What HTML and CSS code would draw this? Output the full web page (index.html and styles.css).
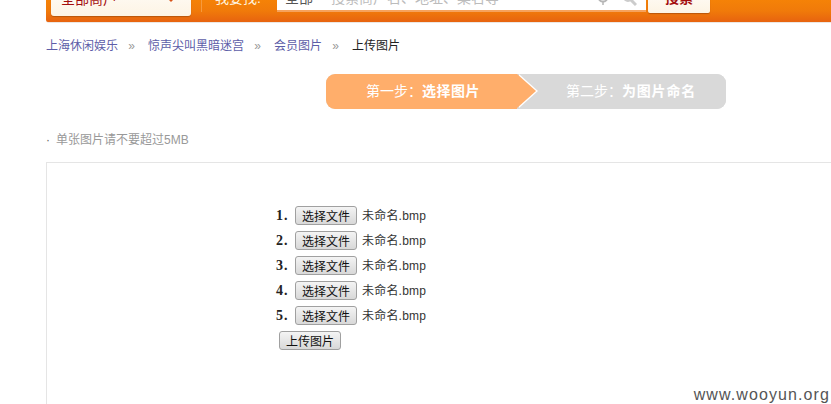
FILE: index.html
```html
<!DOCTYPE html>
<html lang="zh">
<head>
<meta charset="utf-8">
<title>上传图片</title>
<link rel="stylesheet" href="styles.css">
</head>
<body>
<div class="page">
  <header class="topbar">
    <div class="city">全部商户<span class="caret"></span></div>
    <div class="find">我要找:</div>
    <div class="search">
      <span class="scope">全部</span>
      <span class="hint">搜索商户名、地址、菜名等</span>
      <svg class="pin" width="14" height="14" viewBox="0 0 14 14"><circle cx="7" cy="5" r="4.5" fill="none" stroke="#b5b5b5" stroke-width="2"/><path d="M7 10v3" stroke="#b5b5b5" stroke-width="1.5"/></svg>
      <svg class="lens" width="14" height="14" viewBox="0 0 14 14"><circle cx="5" cy="4" r="4" fill="none" stroke="#ccc" stroke-width="2"/><path d="M8 7l5 5" stroke="#ccc" stroke-width="3"/></svg>
    </div>
    <div class="go">搜索</div>
  </header>

  <nav class="crumbs">
    <a class="crumb">上海休闲娱乐</a><span class="sep">»</span>
    <a class="crumb">惊声尖叫黑暗迷宫</a><span class="sep">»</span>
    <a class="crumb">会员图片</a><span class="sep">»</span>
    <span class="crumb-now">上传图片</span>
  </nav>

  <div class="steps">
    <div class="step step-on">第一步：<b>选择图片</b></div>
    <div class="step step-off">第二步：<b>为图片命名</b></div>
  </div>

  <p class="note"><span class="dot">·</span><span class="note-text">单张图片请不要超过5MB</span></p>

  <section class="box">
    <div class="file-row"><b class="num">1.</b><button class="btn" type="button">选择文件</button><span class="fname">未命名.bmp</span></div>
    <div class="file-row"><b class="num">2.</b><button class="btn" type="button">选择文件</button><span class="fname">未命名.bmp</span></div>
    <div class="file-row"><b class="num">3.</b><button class="btn" type="button">选择文件</button><span class="fname">未命名.bmp</span></div>
    <div class="file-row"><b class="num">4.</b><button class="btn" type="button">选择文件</button><span class="fname">未命名.bmp</span></div>
    <div class="file-row"><b class="num">5.</b><button class="btn" type="button">选择文件</button><span class="fname">未命名.bmp</span></div>
    <button class="btn upload" type="button">上传图片</button>
  </section>

  <div class="watermark">www.wooyun.org</div>
</div>
</body>
</html>
```

FILE: styles.css
```css
* { box-sizing: border-box; }
html, body { margin: 0; padding: 0; background: #fff; }
body { font-family: "Liberation Sans", "Noto Sans CJK SC", sans-serif; font-size: 12px; color: #333; }
.page { position: relative; width: 831px; height: 404px; overflow: hidden; }

.topbar {
  display: flex; align-items: flex-end;
  height: 23px; margin-left: 46px; padding: 0 0 7px 5px;
  overflow: hidden;
  background: linear-gradient(#f58207 0, #f07a0a 50%, #e8650f 95%);
  border-bottom: 1px solid #ebe7e3;
  border-radius: 0 0 0 3px;
  font-size: 14px; line-height: 16px;
}
.city {
  position: relative; flex: 0 0 140px; height: 40px; margin-bottom: -1px;
  padding: 15px 0 0 10px;
  background: linear-gradient(#fff, #fdf4e4);
  border-radius: 3px; color: #a30d0d;
  box-shadow: 0 1px 1px #b9560b;
}
.caret {
  position: absolute; left: 117px; top: 23px;
  border: 3px solid transparent; border-top: 3px solid #d8541a; border-bottom: 0;
}
.find {
  flex: 0 0 76px; height: 30px; margin-left: 10px; margin-bottom: 3px;
  padding: 8px 0 0 13px; color: #fff3df;
  border-left: 1px solid #f79a3c;
}
.search {
  position: relative; display: flex; flex: 0 0 369px; height: 30px; margin-bottom: 3px;
  padding: 8px 0 0 8px; background: #fff;
  border-bottom: 2px solid #f6a25c; color: #555;
}
.hint { margin-left: 18px; color: #bcbcbc; }
.pin { position: absolute; left: 319px; top: 10px; }
.lens { position: absolute; left: 346px; top: 11px; }
.go {
  flex: 0 0 62px; height: 30px; margin-left: 2px; margin-bottom: 2px;
  padding: 7px 0 0 17px; font-weight: bold; color: #a30d0d;
  background: linear-gradient(#fff, #fdf4e4);
  border-radius: 2px; box-shadow: 0 1px 1px #b9560b;
}

.crumbs { display: flex; align-items: center; height: 16px; margin: 15px 0 0 46px; line-height: 16px; }
.crumb { color: #5d5da8; }
.crumb-now { color: #222; }
.sep { width: 30px; padding-right: 3px; text-align: center; color: #999; }

.steps {
  display: flex; width: 400px; height: 35px; margin: 20px 0 0 326px;
  font-size: 14px; line-height: 34px; color: #fff; overflow: hidden;
  border-radius: 9px; background: #d9d9d9;
}
.step { position: relative; white-space: nowrap; }
.step-on {
  flex: 0 0 191px; padding-left: 40px; background: #ffae6b;
}
.step-on::after {
  content: ""; position: absolute; left: 191px; top: 0; z-index: 2;
  border-left: 19px solid #ffae6b; border-top: 17.5px solid transparent; border-bottom: 17.5px solid transparent;
}
.step-on::before {
  content: ""; position: absolute; left: 193px; top: 0; z-index: 1;
  border-left: 19px solid #fff; border-top: 17.5px solid transparent; border-bottom: 17.5px solid transparent;
}
.step-off { flex: 1; padding-left: 49px; background: #d9d9d9; }
.step-on b { letter-spacing: .5px; }
.step-off b { letter-spacing: .8px; }

.note { display: flex; gap: 6px; margin: 23px 0 0 46px; height: 16px; line-height: 16px; color: #999; }
.dot { color: #666; }
.note-text { color: #999; }

.box {
  height: 300px; margin: 14px 0 0 46px; padding: 43px 0 0 229px;
  border: 1px solid #e5e5e5; border-right: 0;
}
.file-row { display: flex; align-items: center; height: 19px; margin-bottom: 6px; }
.num { width: 19px; font-family: "Liberation Serif", serif; font-size: 14px; letter-spacing: 1px; color: #222; }
.fname { margin: -2px 0 0 5px; color: #333; letter-spacing: .2px; }
.btn {
  width: 62px; height: 19px; padding: 0; margin: 0;
  font: 12px/17px "Noto Sans CJK SC", sans-serif; color: #111;
  background: linear-gradient(#f4f4f4, #d8d8d8);
  border: 1px solid #a0a0a0; border-radius: 3px;
}
.upload { display: block; margin: 0 0 0 3px; }

.watermark {
  position: absolute; right: 1px; bottom: 0;
  font: 16px/18px "Liberation Sans", sans-serif; letter-spacing: 1.1px; color: #555;
}
```
